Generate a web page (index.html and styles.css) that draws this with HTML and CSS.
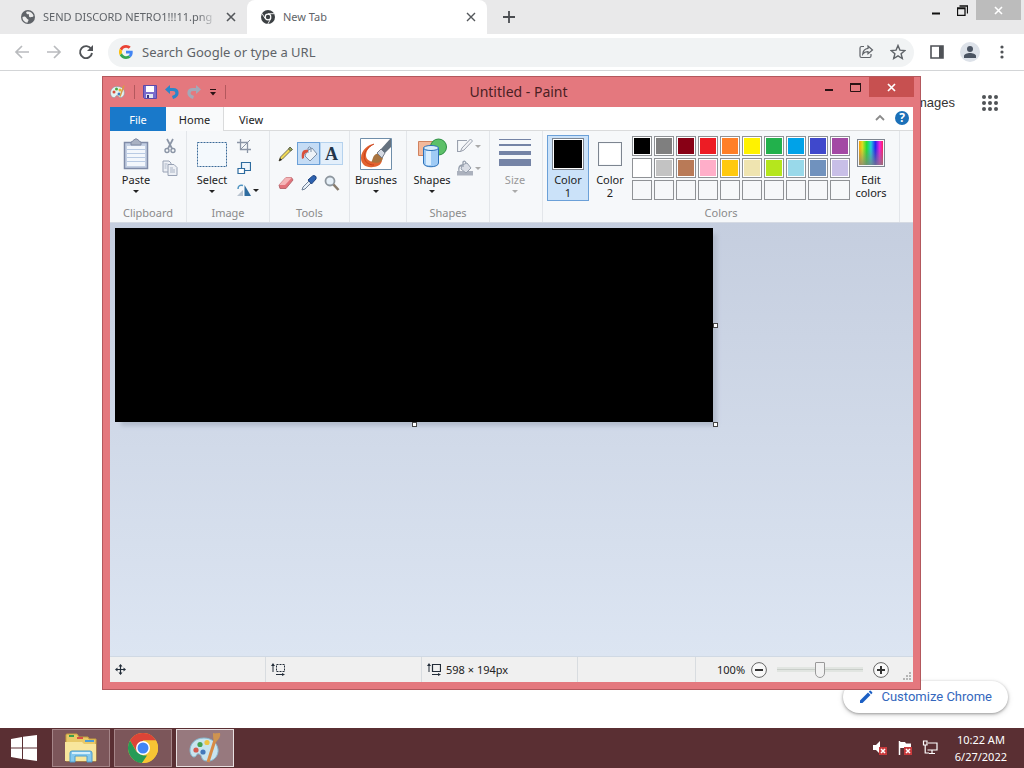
FILE: index.html
```html
<!DOCTYPE html>
<html lang="en">

<head>
	<meta charset="utf-8">
	<meta name="viewport" content="width=device-width, initial-scale=1">
	<title>Untitled - Paint</title>
	<link rel="stylesheet" href="styles.css">
</head>

<body>
	<!-- browser -->
	<main class="browser">
		<header class="tabstrip">
			<div class="tab">
				<svg width="14" height="14" viewBox="0 0 14 14"><circle cx="7" cy="7" r="7" fill="#5f6368"/><path d="M1.500 7C3 6 5 6.500 5.500 8s2 1 2 2-1 1.500-1 2.800C3.500 12.500 1.300 10 1.500 7zM6 1.500C9 1 12 3 12.600 6c-1 1.500-2 .5-3 1.200S7.500 6 8 5 6 4.500 5.500 3.500 5 2 6 1.500z" fill="#ececec"/></svg>
				<span class="tab-title fade">SEND DISCORD NETRO1!!!11.png</span>
				<button type="button" class="plain" aria-label="Close tab"><svg width="10" height="10" viewBox="0 0 10 10"><path d="M1 1l8 8M9 1l-8 8" stroke="#54575b" stroke-width="1.600"/></svg></button>
			</div>
			<div class="tab active">
				<svg width="14" height="14" viewBox="0 0 14 14"><circle cx="7" cy="7" r="7" fill="#3c4043"/><circle cx="7" cy="7" r="3.400" fill="#fff"/><circle cx="7" cy="7" r="2.200" fill="#3c4043"/><path d="M7 3.700h6.200M4.200 8.600L1 3.500M9.800 8.600L6.800 14" stroke="#fff" stroke-width=".9"/></svg>
				<span class="tab-title">New Tab</span>
				<button type="button" class="plain" aria-label="Close tab"><svg width="10" height="10" viewBox="0 0 10 10"><path d="M1 1l8 8M9 1l-8 8" stroke="#54575b" stroke-width="1.400"/></svg></button>
			</div>
			<button type="button" class="plain new-tab" aria-label="New tab"><svg width="12" height="12" viewBox="0 0 12 12"><path d="M6 0v12M0 6h12" stroke="#4a4d51" stroke-width="1.800"/></svg></button>
			<div class="win-controls">
				<button type="button" class="plain" aria-label="Minimize"><svg width="10" height="12" viewBox="0 0 10 12"><path d="M1 9.500h8" stroke="#111" stroke-width="2"/></svg></button>
				<button type="button" class="plain" aria-label="Restore"><svg width="11" height="11" viewBox="0 0 11 11"><path d="M.5 3h7.500v7.500H.5zM.5 3.500h7.500M2.500 1h8v7.500" fill="none" stroke="#111" stroke-width="1.300"/></svg></button>
				<button type="button" class="plain close" aria-label="Close"><svg width="9" height="9" viewBox="0 0 9 9"><path d="M1 1l7 7M8 1L1 8" stroke="#fff" stroke-width="1.600"/></svg></button>
			</div>
		</header>
		<div class="toolbar">
			<button type="button" class="plain" aria-label="Back"><svg width="16" height="16" viewBox="0 0 16 16"><path d="M15 8H2M8 2L2 8l6 6" fill="none" stroke="#b9bbbe" stroke-width="1.700"/></svg></button>
			<button type="button" class="plain" aria-label="Forward"><svg width="16" height="16" viewBox="0 0 16 16"><path d="M1 8h13M8 2l6 6-6 6" fill="none" stroke="#b9bbbe" stroke-width="1.700"/></svg></button>
			<button type="button" class="plain" aria-label="Reload"><svg width="16" height="16" viewBox="0 0 16 16"><path d="M13.200 5A6 6 0 1 0 14 9" fill="none" stroke="#505357" stroke-width="1.900"/><path d="M15 1v6H9z" fill="#505357"/></svg></button>
			<div class="omnibox">
				<svg width="14" height="14" viewBox="0 0 48 48"><path fill="#ea4335" d="M24 9.500c3.500 0 6.700 1.200 9.200 3.600l6.900-6.900C35.900 2.400 30.500 0 24 0 14.600 0 6.500 5.400 2.600 13.200l8 6.200C12.400 13.700 17.700 9.500 24 9.500z"/><path fill="#4285f4" d="M47 24.600c0-1.600-.2-3.100-.4-4.600H24v9h12.900c-.6 3-2.200 5.500-4.700 7.200l7.700 6C44.400 38 47 31.800 47 24.600z"/><path fill="#fbbc05" d="M10.500 28.600c-.5-1.400-.8-3-.8-4.600s.3-3.100.8-4.600l-8-6.200C.9 16.500 0 20.100 0 24s.9 7.500 2.600 10.800z"/><path fill="#34a853" d="M24 48c6.500 0 11.900-2.100 15.900-5.800l-7.700-6c-2.200 1.500-4.900 2.300-8.200 2.300-6.300 0-11.600-4.200-13.500-9.900l-7.900 6.200C6.500 42.600 14.600 48 24 48z"/></svg>
				<input type="text" aria-label="Address and search bar" placeholder="Search Google or type a URL">
				<button type="button" class="plain" aria-label="Share"><svg width="16" height="16" viewBox="0 0 16 16"><path d="M6 2.500H3.500Q2 2.500 2 4v8q0 1.500 1.500 1.500h8Q13 13.500 13 12v-2" fill="none" stroke="#5f6368" stroke-width="1.200"/><path d="M10 2l4.500 4L10 9.800V7.600C7.500 7.500 6 8.400 4.700 10.200 5 7 6.700 4.800 10 4.400z" fill="none" stroke="#5f6368" stroke-width="1.200"/></svg></button>
				<button type="button" class="plain" aria-label="Bookmark"><svg width="16" height="16" viewBox="0 0 16 16"><path d="M8 1.500l1.900 4.600 5 .4-3.800 3.200 1.200 4.800L8 11.900l-4.300 2.600 1.200-4.800L1.100 6.500l5-.4z" fill="none" stroke="#5f6368" stroke-width="1.400"/></svg></button>
			</div>
			<button type="button" class="plain" aria-label="Side panel"><svg width="14" height="14" viewBox="0 0 14 14"><path d="M1 1h12v12H1z" fill="none" stroke="#4f5257" stroke-width="1.600"/><path d="M9 1h4v12H9z" fill="#4f5257"/></svg></button>
			<button type="button" class="plain profile" aria-label="Profile"><svg width="14" height="14" viewBox="0 0 14 14"><circle cx="7" cy="4" r="3" fill="#4b5462"/><path d="M1 13v-2c0-2 3.500-3 6-3s6 1 6 3v2z" fill="#4b5462"/></svg></button>
			<button type="button" class="plain menu" aria-label="Menu"><svg width="4" height="14" viewBox="0 0 4 14"><g fill="#505357"><circle cx="2" cy="2" r="1.600"/><circle cx="2" cy="7" r="1.600"/><circle cx="2" cy="12" r="1.600"/></g></svg></button>
		</div>
		<div class="page">
			<nav class="page-nav">
				<a href="#">Images</a>
				<button type="button" class="plain" aria-label="Google apps"><svg width="16" height="16" viewBox="0 0 16 16"><g fill="#505357"><circle cx="2" cy="2" r="2"/><circle cx="8" cy="2" r="2"/><circle cx="14" cy="2" r="2"/><circle cx="2" cy="8" r="2"/><circle cx="8" cy="8" r="2"/><circle cx="14" cy="8" r="2"/><circle cx="2" cy="14" r="2"/><circle cx="8" cy="14" r="2"/><circle cx="14" cy="14" r="2"/></g></svg></button>
			</nav>
			<button type="button" class="customize"><svg width="14" height="14" viewBox="0 0 14 14"><path d="M1 10.500L9 2.500l2.500 2.500-8 8H1zM9.800 1.700l1-1Q11.300.3 12 1l1.200 1.200q.5.500 0 1l-1 1z" fill="#1b5fc4"/></svg>Customize Chrome</button>
		</div>
	</main>

	<!-- paint -->
	<section class="paint" aria-label="Untitled - Paint">
		<header class="titlebar">
			<div class="quick">
				<svg width="16" height="16" viewBox="0 0 32 32"><path d="M14 5C5 5 1 12 1 18s4 10 8 9c3-1 2-4 5-4 4 0 3 5 8 4 6-1 8-8 6-14S20 5 14 5z" fill="#e4f2f2" stroke="#7697a0"/><circle cx="8" cy="16" r="3" fill="#d84f38"/><circle cx="13" cy="10" r="3" fill="#45a843"/><circle cx="20" cy="12" r="3" fill="#e8b92c"/><circle cx="18" cy="20" r="3" fill="#3e7dc0"/><path d="M20 25L28 3" stroke="#db9b45" stroke-width="3"/></svg>
				<i class="sep"></i>
				<button type="button" class="plain" aria-label="Save"><svg width="14" height="14" viewBox="0 0 14 14"><path d="M.5.5h13v13h-12l-1-1z" fill="#7a6ccc" stroke="#5a4aa8"/><path d="M3 1h8v6H3z" fill="#fff"/><path d="M3 9h7v4H3z" fill="#dfe6f2"/><path d="M4 10h2v3H4z" fill="#3d3480"/></svg></button>
				<button type="button" class="plain" aria-label="Undo"><svg width="14" height="14" viewBox="0 0 14 14"><path d="M3 4.500h5c3 0 4 1.500 4 3.500s-1.500 3.500-4.500 4.500" fill="none" stroke="#2b86c9" stroke-width="3.200"/><path d="M0 4.500L5 0v9z" fill="#2b86c9"/></svg></button>
				<button type="button" class="plain" aria-label="Redo"><svg width="14" height="14" viewBox="0 0 14 14"><path d="M11 4.500H6c-3 0-4 1.500-4 3.500s1.500 3.500 4.500 4.500" fill="none" stroke="#a3a9b8" stroke-width="3.200"/><path d="M14 4.500L9 0v9z" fill="#a3a9b8"/></svg></button>
				<button type="button" class="plain" aria-label="Customize toolbar"><svg width="8" height="8" viewBox="0 0 8 8"><path d="M1 1.500h6" stroke="#2a1214"/><path d="M1 4h6L4 7.500z" fill="#2a1214"/></svg></button>
				<i class="sep"></i>
			</div>
			<h1>Untitled - Paint</h1>
			<div class="win-controls">
				<button type="button" class="plain" aria-label="Minimize"><svg width="10" height="12" viewBox="0 0 10 12"><path d="M1 9h8" stroke="#2a1214" stroke-width="2"/></svg></button>
				<button type="button" class="plain" aria-label="Maximize"><svg width="11" height="9" viewBox="0 0 11 9"><path d="M.5 1h10v7.500H.5z" fill="none" stroke="#2a1214"/><path d="M0 1h11" stroke="#2a1214" stroke-width="2"/></svg></button>
				<button type="button" class="plain close" aria-label="Close"><svg width="9" height="9" viewBox="0 0 9 9"><path d="M1 1l7 7M8 1L1 8" stroke="#fff" stroke-width="1.700"/></svg></button>
			</div>
		</header>

		<nav class="ribbon-tabs">
			<button type="button" class="file">File</button>
			<button type="button" class="active">Home</button>
			<button type="button">View</button>
			<span class="spacer"></span>
			<button type="button" class="plain" aria-label="Collapse ribbon"><svg width="10" height="8" viewBox="0 0 10 8"><path d="M1 6l4-4 4 4" fill="none" stroke="#8a8a8a" stroke-width="1.800"/></svg></button>
			<button type="button" class="help" aria-label="Help">?</button>
		</nav>

		<div class="ribbon">
			<section class="group clipboard">
				<div class="items">
					<button type="button" class="big">
						<svg width="26" height="32" viewBox="0 0 26 32"><path d="M1.500 4.500h23v26h-23z" fill="#c3cfe3" stroke="#7f8ba8" stroke-width="1.500"/><path d="M4 8h18v20H4z" fill="#f3f7fc"/><path d="M4 11.500h18M4 15.500h18M4 19.500h18M4 23.500h18" stroke="#b9cbe4"/><path d="M8 7V4q2 0 2.500-2 2.500-2.500 5 0 .5 2 2.500 2v3z" fill="#a9b1c2" stroke="#808aa2"/></svg>
						<span>Paste</span><i class="arrow"></i>
					</button>
					<div class="stack">
						<button type="button" class="plain" aria-label="Cut"><svg width="14" height="16" viewBox="0 0 14 16"><path d="M4 1l5 9.500M10 1L5 10.500" stroke="#8b95a6" stroke-width="1.700"/><circle cx="4" cy="12.500" r="2" fill="none" stroke="#8b95a6" stroke-width="1.400"/><circle cx="10" cy="12.500" r="2" fill="none" stroke="#8b95a6" stroke-width="1.400"/></svg></button>
						<button type="button" class="plain" aria-label="Copy"><svg width="16" height="16" viewBox="0 0 16 16"><path d="M1 1h6l2 2v9H1z" fill="#edf0f5" stroke="#98a2b4"/><path d="M6 4.500h6l3 3v8H6z" fill="#edf0f5" stroke="#98a2b4"/><path d="M2.500 4h3M2.500 6h2M2.500 8h2M8 8h3M8 10h5M8 12h5" stroke="#a9b3c4"/></svg></button>
					</div>
				</div>
				<h2>Clipboard</h2>
			</section>

			<section class="group image">
				<div class="items">
					<button type="button" class="big">
						<svg width="32" height="32" viewBox="0 0 32 32"><path d="M1.500 4.500h29v24h-29z" fill="#f4f9fd" stroke="#3a6a98" stroke-dasharray="2 1"/></svg>
						<span>Select</span><i class="arrow"></i>
					</button>
					<div class="stack three">
						<button type="button" class="plain" aria-label="Crop"><svg width="14" height="14" viewBox="0 0 14 14"><path d="M3.500 0v10.500H14M0 3.500h10.500V14" fill="none" stroke="#8b95a6" stroke-width="1.300"/><path d="M3.500 10.500L13 1" stroke="#8b95a6"/></svg></button>
						<button type="button" class="plain" aria-label="Resize"><svg width="14" height="14" viewBox="0 0 14 14"><path d="M4.500 1.500h9v8h-9z" fill="#eef5fc" stroke="#2e6c9f" stroke-width="1.200"/><path d="M1 7.500h6.500v5H1z" fill="#fff" stroke="#2e6c9f" stroke-width="1.200"/></svg></button>
						<button type="button" class="plain rotate" aria-label="Rotate"><svg width="14" height="14" viewBox="0 0 14 14"><path d="M7.500 2v11H14z" fill="#2e6c9f"/><path d="M6 7v6H0z" fill="#b9c4d0"/><path d="M1 6C1 3 3 1.500 6 2.500" fill="none" stroke="#4f94c2" stroke-width="1.500"/></svg><i class="arrow"></i></button>
					</div>
				</div>
				<h2>Image</h2>
			</section>

			<section class="group tools">
				<div class="items">
					<div class="tool-grid">
						<button type="button" aria-label="Pencil"><svg width="16" height="16" viewBox="0 0 16 16"><path d="M1 15l1.500-4 8.500-8.500 2 2L4.500 13z" fill="#f0d955" stroke="#77715a"/><path d="M10.500 3l1.500-2 2.500 2.500-2 1.500z" fill="#9aa658" stroke="#5f6446"/><path d="M1 15l1-3 2 2z" fill="#222"/></svg></button>
						<button type="button" class="selected" aria-label="Fill with color"><svg width="18" height="16" viewBox="0 0 18 16"><path d="M7 5l5-3 5 6-7 7-5-5z" fill="#eef2f7" stroke="#7f91a8"/><path d="M8 7V2q1.500-2.500 3 0v4" fill="none" stroke="#7f91a8"/><path d="M8 4C3 3 1 6 2 13l2-1c0-4 1-5 4-6z" fill="#d9503c"/></svg></button>
						<button type="button" class="text-tool" aria-label="Text">A</button>
						<button type="button" aria-label="Eraser"><svg width="16" height="16" viewBox="0 0 16 16"><path d="M1 10l7-7.500h5.500L15 5l-7 8.500H2z" fill="#e2727a" stroke="#b96a70"/><path d="M1 10h6l7-7.500H8z" fill="#f5b5b7"/></svg></button>
						<button type="button" aria-label="Color picker"><svg width="16" height="16" viewBox="0 0 16 16"><path d="M1 15l1-3 6-6 2 2-6 6z" fill="#e8f0f8" stroke="#6f8096"/><path d="M7 5l4.500-4 1.500-.5q3 .5 2 3.500L10.500 9z" fill="#2d62b0" stroke="#1f4480"/></svg></button>
						<button type="button" aria-label="Magnifier"><svg width="16" height="16" viewBox="0 0 16 16"><circle cx="6" cy="6" r="4.500" fill="#e6f0f8" stroke="#8e979f" stroke-width="1.800"/><path d="M9.500 9.500L14.500 15" stroke="#877b6c" stroke-width="2.600"/></svg></button>
					</div>
				</div>
				<h2>Tools</h2>
			</section>

			<section class="group brushes">
				<div class="items">
					<button type="button" class="big">
						<svg width="32" height="32" viewBox="0 0 32 32"><path d="M.5.500h31v31H.5z" fill="#fff" stroke="#6f8eaa"/><path d="M14 6C9 6 1 12 1 20c0 7 6 10 12 9 6 0 9-4 9-7-4 2-9 3-12 1-7-3-4-13 4-17z" fill="#e2622f"/><path d="M14 6C8 9 2 15 5 22c1 3 5 5 9 5" fill="none" stroke="#c9401c"/><path d="M11 24c2-1 1-6 5-8l4-1 3 4c0 5-5 7-12 5z" fill="#a8733f"/><path d="M17 15l4-4 4 4-3 5z" fill="#d5dae2" stroke="#777f8d"/><path d="M21 11L30 1h1v8l-6 6z" fill="#65727f"/></svg>
						<span>Brushes</span><i class="arrow"></i>
					</button>
				</div>
			</section>

			<section class="group shapes">
				<div class="items">
					<button type="button" class="big">
						<svg width="32" height="32" viewBox="0 0 32 32"><path d="M2.500 3.500h15v14h-15z" fill="#f3b99c" stroke="#d0825f"/><circle cx="22.500" cy="9" r="8" fill="#5cc068" stroke="#2e8f45"/><path d="M7.500 10v15c0 5 15 5 15 0V10z" fill="#9fcbf5" stroke="#2d71b8"/><path d="M10 13h5v14h-5z" fill="#dbeefe"/><ellipse cx="15" cy="10" rx="7.500" ry="2.500" fill="#d9edfd" stroke="#2d71b8"/></svg>
						<span>Shapes</span><i class="arrow"></i>
					</button>
					<div class="stack">
						<button type="button" class="plain off" aria-label="Outline"><svg width="16" height="16" viewBox="0 0 16 16"><path d="M10 2.500H.5v11H4" fill="none" stroke="#9aa1ae" stroke-width="1.200"/><path d="M13.500 1l2 2L7 12l-3.500 1.500L5 10z" fill="#f2f3f6" stroke="#9aa1ae"/></svg><i class="arrow"></i></button>
						<button type="button" class="plain off" aria-label="Fill"><svg width="16" height="16" viewBox="0 0 16 16"><path d="M0 11h16v4.500H0z" fill="#abb1bd"/><path d="M5 5l5-2 4 5-5 5-5-4z" fill="#d9dde5" stroke="#959eac"/><path d="M6 7V2q2-2 3 1M5 5q-4 1-3 6" fill="none" stroke="#959eac" stroke-width="1.300"/></svg><i class="arrow"></i></button>
					</div>
				</div>
				<h2>Shapes</h2>
			</section>

			<section class="group size">
				<div class="items">
					<button type="button" class="big" disabled>
						<svg width="32" height="32" viewBox="0 0 32 32"><g fill="#7584a6"><path d="M0 1h32v1H0zM0 6h32v2H0zM0 13h32v4H0zM0 21h32v7H0z"/></g></svg>
						<span>Size</span><i class="arrow"></i>
					</button>
				</div>
			</section>

			<section class="group colors">
				<div class="items">
					<button type="button" class="color-pick selected"><i class="chip black"></i><span>Color<br>1</span></button>
					<button type="button" class="color-pick"><i class="chip small"></i><span>Color<br>2</span></button>
					<div class="palette">
						<button type="button" aria-label="Black" class="c-black"></button>
						<button type="button" aria-label="Gray 50%" class="c-gray"></button>
						<button type="button" aria-label="Dark red" class="c-darkred"></button>
						<button type="button" aria-label="Red" class="c-red"></button>
						<button type="button" aria-label="Orange" class="c-orange"></button>
						<button type="button" aria-label="Yellow" class="c-yellow"></button>
						<button type="button" aria-label="Green" class="c-green"></button>
						<button type="button" aria-label="Turquoise" class="c-turquoise"></button>
						<button type="button" aria-label="Indigo" class="c-indigo"></button>
						<button type="button" aria-label="Purple" class="c-purple"></button>
						<button type="button" aria-label="White" class="c-white"></button>
						<button type="button" aria-label="Gray 25%" class="c-silver"></button>
						<button type="button" aria-label="Brown" class="c-brown"></button>
						<button type="button" aria-label="Rose" class="c-rose"></button>
						<button type="button" aria-label="Gold" class="c-gold"></button>
						<button type="button" aria-label="Light yellow" class="c-cream"></button>
						<button type="button" aria-label="Lime" class="c-lime"></button>
						<button type="button" aria-label="Light turquoise" class="c-sky"></button>
						<button type="button" aria-label="Blue-gray" class="c-steel"></button>
						<button type="button" aria-label="Lavender" class="c-lavender"></button>
						<button type="button" aria-label="Custom 1" class="empty"></button>
						<button type="button" aria-label="Custom 2" class="empty"></button>
						<button type="button" aria-label="Custom 3" class="empty"></button>
						<button type="button" aria-label="Custom 4" class="empty"></button>
						<button type="button" aria-label="Custom 5" class="empty"></button>
						<button type="button" aria-label="Custom 6" class="empty"></button>
						<button type="button" aria-label="Custom 7" class="empty"></button>
						<button type="button" aria-label="Custom 8" class="empty"></button>
						<button type="button" aria-label="Custom 9" class="empty"></button>
						<button type="button" aria-label="Custom 10" class="empty"></button>
					</div>
					<button type="button" class="color-pick edit"><i class="chip rainbow"></i><span>Edit<br>colors</span></button>
				</div>
				<h2>Colors</h2>
			</section>
		</div>

		<div class="workspace">
			<div class="canvas">
				<i class="handle right"></i>
				<i class="handle bottom"></i>
				<i class="handle corner"></i>
			</div>
		</div>

		<footer class="status">
			<div class="cell"><svg width="11" height="11" viewBox="0 0 11 11"><path d="M5.500 1v9M1 5.500h9" stroke="#222c38" stroke-width="1.200"/><path d="M5.500 0L7.500 2.500h-4zM5.500 11L3.500 8.500h4zM0 5.500L2.500 3.500v4zM11 5.500L8.500 7.500v-4z" fill="#222c38"/></svg></div>
			<div class="cell"><svg width="14" height="13" viewBox="0 0 14 13"><path d="M5.500 1.500h8v7h-8z" fill="none" stroke="#222c38" stroke-dasharray="2 1"/><path d="M2 9V2M5 11.500h7" stroke="#222c38"/><path d="M2 0l2 3H0zM14 11.500l-3 1.500v-3z" fill="#222c38"/></svg></div>
			<div class="cell"><svg width="14" height="13" viewBox="0 0 14 13"><path d="M5.500 1.500h8v7h-8z" fill="none" stroke="#222c38" stroke-width="1.200"/><path d="M2 9V2M5 11.500h7" stroke="#222c38"/><path d="M2 0l2 3H0zM14 11.500l-3 1.500v-3z" fill="#222c38"/></svg>598 × 194px</div>
			<div class="cell narrow"></div>
			<div class="cell zoom">
				<label for="zoom">100%</label>
				<button type="button" class="plain" aria-label="Zoom out"><svg width="16" height="16" viewBox="0 0 16 16"><circle cx="8" cy="8" r="7.400" fill="#f8f8f8" stroke="#666"/><path d="M4 8h8" stroke="#333" stroke-width="2"/></svg></button>
				<input type="range" id="zoom" min="0" max="100" value="50">
				<button type="button" class="plain" aria-label="Zoom in"><svg width="16" height="16" viewBox="0 0 16 16"><circle cx="8" cy="8" r="7.400" fill="#f8f8f8" stroke="#666"/><path d="M4 8h8M8 4v8" stroke="#333" stroke-width="2"/></svg></button>
				<svg class="grip" width="8" height="8" viewBox="0 0 8 8"><path d="M6 0h2v2H6zM6 3h2v2H6zM6 6h2v2H6zM3 3h2v2H3zM3 6h2v2H3zM0 6h2v2H0z" fill="#b5b5b5"/></svg>
			</div>
		</footer>
	</section>

	<!-- taskbar -->
	<footer class="taskbar">
		<button type="button" class="plain start" aria-label="Start"><svg width="26" height="26" viewBox="0 0 26 26"><path d="M0 4l11-2v10.500H0zM12 1.800L26 0v12.500H12zM0 13.500h11V24L0 22zM12 13.500h14V26l-14-2z" fill="#fff"/></svg></button>
		<button type="button" class="task" aria-label="File Explorer"><svg width="34" height="30" viewBox="0 0 34 30"><path d="M2 5V2q0-1 1-1h10l2 3h9l1 2h7v22H2z" fill="#e8c967" stroke="#c79f3c"/><path d="M5 2h5v2H5z" fill="#3b9d4b"/><path d="M13 4h6v2h-6z" fill="#d85142"/><path d="M21 7h9v2h-9z" fill="#4a9dd5"/><path d="M1 9h17l2 2h12v17H1z" fill="#f8e69c"/><path d="M6 29V20q0-2 2-2h18q2 0 2 2v9h-5v-6H11v6z" fill="#85c9ee" stroke="#4c9bcc"/><path d="M8 20h18" stroke="#d5effb" stroke-width="2"/></svg></button>
		<button type="button" class="task" aria-label="Google Chrome"><svg width="30" height="30" viewBox="0 0 30 30"><circle cx="15" cy="15" r="15" fill="#f6c534"/><path d="M2 7.500A15 15 0 0 1 28 7.500H15L9 19z" fill="#dc4437"/><path d="M2 7.500L8.500 18.700 15 22.500h6.500L14 30A15 15 0 0 1 2 7.500z" fill="#269b57"/><path d="M15 7.500h13A15 15 0 0 1 14 30l7.500-11.300z" fill="#f6c534"/><circle cx="15" cy="15" r="7" fill="#fff"/><circle cx="15" cy="15" r="5.500" fill="#4285f4"/></svg></button>
		<button type="button" class="task active" aria-label="Paint"><svg width="32" height="32" viewBox="0 0 32 32"><path d="M15 6C5 6 1 13 1 18c0 4 2 7 4 7 3 0 2-4 5-3 4 1 1 7 8 7 7 1 12-6 11-12S23 6 15 6z" fill="#c8e4ef" stroke="#86b9d0"/><circle cx="7" cy="18" r="2.600" fill="#d45a4d"/><circle cx="11" cy="12.500" r="2.600" fill="#43a154"/><circle cx="18" cy="10.500" r="2.600" fill="#ecc443"/><circle cx="14" cy="20" r="2.600" fill="#4378ba"/><path d="M19 30l7-22" stroke="#d88b45" stroke-width="3"/><path d="M25 9c-1-3-1-5-1-8 2 1 4 0 7 0 1 3-1 6-4 9z" fill="#cf9450"/></svg></button>
		<div class="tray">
			<button type="button" class="plain" aria-label="Volume"><svg width="16" height="16" viewBox="0 0 16 16"><path d="M1 5h3l4-4v13l-4-4H1z" fill="#fff"/><path d="M7 7h8v8H7z" fill="#c93a3c"/><path d="M9 9l4 4M13 9l-4 4" stroke="#fff" stroke-width="1.500"/></svg></button>
			<button type="button" class="plain" aria-label="Action Center"><svg width="16" height="16" viewBox="0 0 16 16"><path d="M2.500 1v14" stroke="#fff" stroke-width="1.500"/><path d="M3 2h5l1 1.500h5V9H8L7 8H3z" fill="#fff"/><path d="M7 7h8v8H7z" fill="#c93a3c"/><path d="M9 9l4 4M13 9l-4 4" stroke="#fff" stroke-width="1.500"/></svg></button>
			<button type="button" class="plain" aria-label="Network"><svg width="16" height="16" viewBox="0 0 16 16"><path d="M6 3h9v7H5.500M10 10v3M7 13.500h6M1.500 1h3.500v4H1.500zM3.200 5v8H7" fill="none" stroke="#fff" stroke-width="1.200"/></svg></button>
			<time datetime="2022-06-27T10:22">10:22 AM<br>6/27/2022</time>
		</div>
	</footer>
</body>

</html>
```
FILE: styles.css
```css
* {
	box-sizing: border-box;
}

body {
	margin: 0;
	display: flex;
	flex-direction: column;
	height: 100vh;
	position: relative;
	overflow: hidden;
	font: 11px/16px "Segoe UI", "Noto Sans", sans-serif;
	color: #222;
	background: #fff;
}

svg {
	display: block;
	flex: none;
}

button {
	font: inherit;
	color: inherit;
	border: 0;
	padding: 0;
	background: none;
}

.plain {
	display: flex;
	align-items: center;
	justify-content: center;
	flex: none;
}

/* browser */
.browser {
	flex: 1;
	display: flex;
	flex-direction: column;
	min-height: 0;
}

.tabstrip {
	display: flex;
	height: 34px;
	padding-left: 7px;
	background: #e9e9ea;
}

.tab {
	display: flex;
	align-items: center;
	gap: 8px;
	width: 240px;
	padding: 0 11px 0 14px;
	color: #5f6368;
}

.tab.active {
	border-radius: 8px 8px 0 0;
	background: #fff;
}

.tab-title {
	flex: 1;
	white-space: nowrap;
}

.fade {
	-webkit-mask-image: linear-gradient(to right, #000 88%, transparent);
	mask-image: linear-gradient(to right, #000 88%, transparent);
}

.new-tab {
	width: 44px;
}

.win-controls {
	display: flex;
	align-items: flex-start;
	margin-left: auto;
	padding-right: 3px;
}

.win-controls .plain {
	width: 27px;
	height: 20px;
}

.win-controls .close {
	width: 45px;
	background: #bcbcbc;
}

.toolbar {
	display: flex;
	align-items: center;
	gap: 16px;
	height: 37px;
	padding: 0 20px 0 14px;
	border-bottom: 1px solid #d3d5d7;
}

.toolbar .menu {
	margin-left: 4px;
}

.omnibox {
	flex: 1;
	display: flex;
	align-items: center;
	gap: 16px;
	height: 29px;
	margin-left: -2px;
	padding: 0 8px 0 11px;
	border-radius: 15px;
	background: #f1f3f4;
}

.omnibox input {
	flex: 1;
	min-width: 0;
	margin-left: -7px;
	padding: 0;
	border: 0;
	background: none;
	font: 13px/20px "Segoe UI", "Noto Sans", sans-serif;
}

.omnibox input::placeholder {
	color: #5f6368;
}

.profile {
	width: 20px;
	height: 20px;
	border-radius: 50%;
	background: #dde2e9;
}

.page {
	flex: 1;
	display: flex;
	flex-direction: column;
	justify-content: space-between;
	align-items: flex-end;
	padding: 20px 16px 15px;
}

.page-nav {
	display: flex;
	align-items: center;
	gap: 27px;
	height: 24px;
	padding-right: 10px;
	font: 13px/16px "Liberation Sans", Arial, sans-serif;
}

.page-nav a {
	color: #333;
	text-decoration: none;
}

.customize {
	display: flex;
	align-items: center;
	gap: 8px;
	height: 32px;
	padding: 0 16px;
	border-radius: 16px;
	background: #fff;
	box-shadow: 0 1px 3px rgba(0, 0, 0, .35), 0 2px 6px rgba(0, 0, 0, .12);
	color: #3467bd;
	font: 13px/16px Roboto, sans-serif;
}

/* paint window */
.paint {
	position: absolute;
	left: 102px;
	top: 76px;
	width: 819px;
	height: 614px;
	display: flex;
	flex-direction: column;
	padding: 0 7px 7px;
	border: 1px solid #b3585d;
	background: #e4787e;
}

.titlebar {
	display: flex;
	height: 30px;
	flex: none;
}

.quick {
	display: flex;
	align-items: center;
	gap: 8px;
	width: 118px;
}

.quick .sep {
	width: 1px;
	height: 14px;
	background: #b3585d;
}

.titlebar h1 {
	flex: 1;
	margin: 0;
	padding-right: 6px;
	text-align: center;
	font-size: 14px;
	font-weight: 400;
	line-height: 30px;
	color: #4a2023;
}

.titlebar .win-controls {
	margin: 0 -1px 0 0;
	padding-right: 0;
}

.titlebar .close {
	background: #c75050;
}

.ribbon-tabs {
	display: flex;
	height: 24px;
	flex: none;
	background: #fff;
	box-shadow: inset 0 -1px #dadbdc;
}

.ribbon-tabs button {
	width: 54px;
	padding-top: 1px;
}

.ribbon-tabs .file {
	width: 56px;
	background: #1979ca;
	color: #fff;
}

.ribbon-tabs .active {
	width: 58px;
	border-right: 1px solid #dadbdc;
	background: #f9fafb;
}

.spacer {
	flex: 1;
}

.ribbon-tabs .plain {
	width: 24px;
	padding: 0 0 2px;
}

.ribbon-tabs .help {
	width: 14px;
	height: 14px;
	margin: 4px 4px 0 3px;
	padding: 0;
	border-radius: 50%;
	background: #1b70b8;
	color: #fff;
	font-size: 12px;
	font-weight: 700;
	line-height: 14px;
}

.ribbon {
	display: flex;
	height: 92px;
	flex: none;
	background: #f6f8fa;
	border-bottom: 1px solid #d5dae3;
}

.group {
	display: flex;
	flex-direction: column;
	padding: 4px 0 2px;
	border-right: 1px solid #e3e6ea;
}

.group h2 {
	margin: 0;
	text-align: center;
	font-size: 11px;
	font-weight: 400;
	line-height: 14px;
	color: #8a8a8a;
}

.clipboard {
	width: 77px;
}

.image {
	width: 83px;
}

.tools {
	width: 80px;
}

.brushes {
	width: 57px;
}

.shapes {
	width: 83px;
}

.size {
	width: 53px;
}

.colors {
	width: 357px;
}

.items {
	flex: 1;
	display: flex;
	align-items: flex-start;
}

.big {
	display: flex;
	flex-direction: column;
	align-items: center;
	width: 52px;
	padding-top: 3px;
	line-height: 20px;
}

.big:disabled {
	color: #999;
}

.arrow {
	border: 3px solid transparent;
	border-top-color: #222;
	border-bottom: 0;
}

.big:disabled .arrow,
.off .arrow {
	border-top-color: #aaa;
}

.stack {
	display: flex;
	flex-direction: column;
	gap: 6px;
	padding-top: 3px;
}

.stack.three {
	gap: 8px;
	padding-top: 4px;
}

.stack .plain {
	gap: 2px;
}

.image .big,
.shapes .big,
.size .big {
	width: 50px;
}

.stack.three .plain {
	justify-content: flex-start;
}

.tool-grid {
	display: grid;
	grid-template-columns: repeat(3, 23px);
	grid-auto-rows: 23px;
	row-gap: 6px;
	padding: 7px 0 0 4px;
}

.tool-grid button {
	display: flex;
	align-items: center;
	justify-content: center;
}

.tool-grid .selected {
	border: 1px solid #6ba0d8;
	background: #c5dcf5;
}

.tool-grid .text-tool {
	border: 1px solid #b5d2ee;
	background: #e3effb;
	color: #23354a;
	font: bold 18px/20px "Liberation Serif", serif;
}

.colors .items {
	padding-left: 4px;
}

.color-pick {
	display: flex;
	flex-direction: column;
	align-items: center;
	width: 42px;
	height: 66px;
	padding-top: 2px;
	border: 1px solid transparent;
	line-height: 13px;
}

.color-pick span {
	margin-top: auto;
	padding-bottom: 1px;
}

.color-pick.selected {
	border-color: #6ba0d8;
	background: #cbe2f9;
}

.chip {
	width: 32px;
	height: 32px;
	border: 1px solid #7d8590;
	background: #fff;
	background-clip: content-box;
	padding: 1px;
}

.chip.black {
	background-color: #000;
	box-shadow: inset 0 0 0 1px #fff;
}

.chip.small {
	width: 24px;
	height: 24px;
	margin-top: 4px;
}

.chip.rainbow {
	width: 28px;
	height: 28px;
	margin-top: 1px;
	background-image: linear-gradient(to bottom, transparent 30%, rgba(128, 128, 128, .8)), linear-gradient(to right, #f80, #dd2, #2d3, #2cd, #22e, #e2d, #f23);
}

.palette {
	display: grid;
	grid-template-columns: repeat(10, 20px);
	grid-auto-rows: 20px;
	gap: 2px;
	padding: 1px 0 0 1px;
}

.palette button {
	border: 1px solid #8f9296;
	padding: 1px;
	background-clip: content-box;
	box-shadow: inset 0 0 0 1px #fff;
}

.palette .empty {
	box-shadow: none;
}

.c-black { background-color: #000; }
.c-gray { background-color: #7f7f7f; }
.c-darkred { background-color: #880015; }
.c-red { background-color: #ed1c24; }
.c-orange { background-color: #ff7f27; }
.c-yellow { background-color: #fff200; }
.c-green { background-color: #22b14c; }
.c-turquoise { background-color: #00a2e8; }
.c-indigo { background-color: #3f48cc; }
.c-purple { background-color: #a349a4; }
.c-white { background-color: #fff; }
.c-silver { background-color: #c3c3c3; }
.c-brown { background-color: #b97a57; }
.c-rose { background-color: #ffaec9; }
.c-gold { background-color: #ffc90e; }
.c-cream { background-color: #efe4b0; }
.c-lime { background-color: #b5e61d; }
.c-sky { background-color: #99d9ea; }
.c-steel { background-color: #7092be; }
.c-lavender { background-color: #c8bfe7; }

.workspace {
	flex: 1;
	padding: 5px;
	background: linear-gradient(#c5cedf, #dce5f2);
}

.canvas {
	position: relative;
	width: 598px;
	height: 194px;
	background: #000;
	box-shadow: 5px 5px 4px -1px #b4bdcd;
}

.handle {
	position: absolute;
	width: 5px;
	height: 5px;
	border: 1px solid #444;
	background: #fff;
}

.handle.right {
	left: 100%;
	top: 50%;
	margin-top: -2px;
}

.handle.bottom {
	left: 50%;
	top: 100%;
	margin-left: -2px;
}

.handle.corner {
	left: 100%;
	top: 100%;
}

.status {
	display: flex;
	height: 26px;
	flex: none;
	border-top: 1px solid #d0d9e4;
	background: #f0f0f0;
}

.cell {
	display: flex;
	align-items: center;
	gap: 5px;
	width: 156px;
	padding-left: 5px;
	border-right: 1px solid #d8dce0;
}

.cell.narrow {
	width: 118px;
}

.cell.zoom {
	flex: 1;
	gap: 6px;
	padding-left: 21px;
	border-right: 0;
}

.zoom input {
	-webkit-appearance: none;
	appearance: none;
	width: 86px;
	height: 18px;
	margin: 0 4px;
	background: linear-gradient(#c9cec9, #c9cec9) center / 100% 1px no-repeat, linear-gradient(#e1e5e1, #e1e5e1) center / 100% 5px no-repeat;
}

.zoom input::-webkit-slider-thumb {
	-webkit-appearance: none;
	width: 10px;
	height: 16px;
	border: 1px solid #999;
	border-radius: 1px 1px 5px 5px;
	background: #f2f2f2;
}

.grip {
	align-self: flex-end;
	margin: 0 2px 2px auto;
}

/* taskbar */
.taskbar {
	display: flex;
	align-items: center;
	gap: 4px;
	height: 40px;
	flex: none;
	background: #5a2f33;
	color: #fff;
}

.start {
	width: 48px;
	height: 40px;
}

.task {
	display: flex;
	align-items: center;
	justify-content: center;
	width: 58px;
	height: 38px;
	border: 1px solid #a58588;
	background: #7c565a;
}

.task.active {
	border-color: #e8dfe0;
	background: #97797e;
}

.tray {
	display: flex;
	align-items: center;
	gap: 9px;
	margin-left: auto;
	padding-right: 17px;
}

.tray time {
	margin-left: 8px;
	text-align: center;
	line-height: 17px;
}
```
